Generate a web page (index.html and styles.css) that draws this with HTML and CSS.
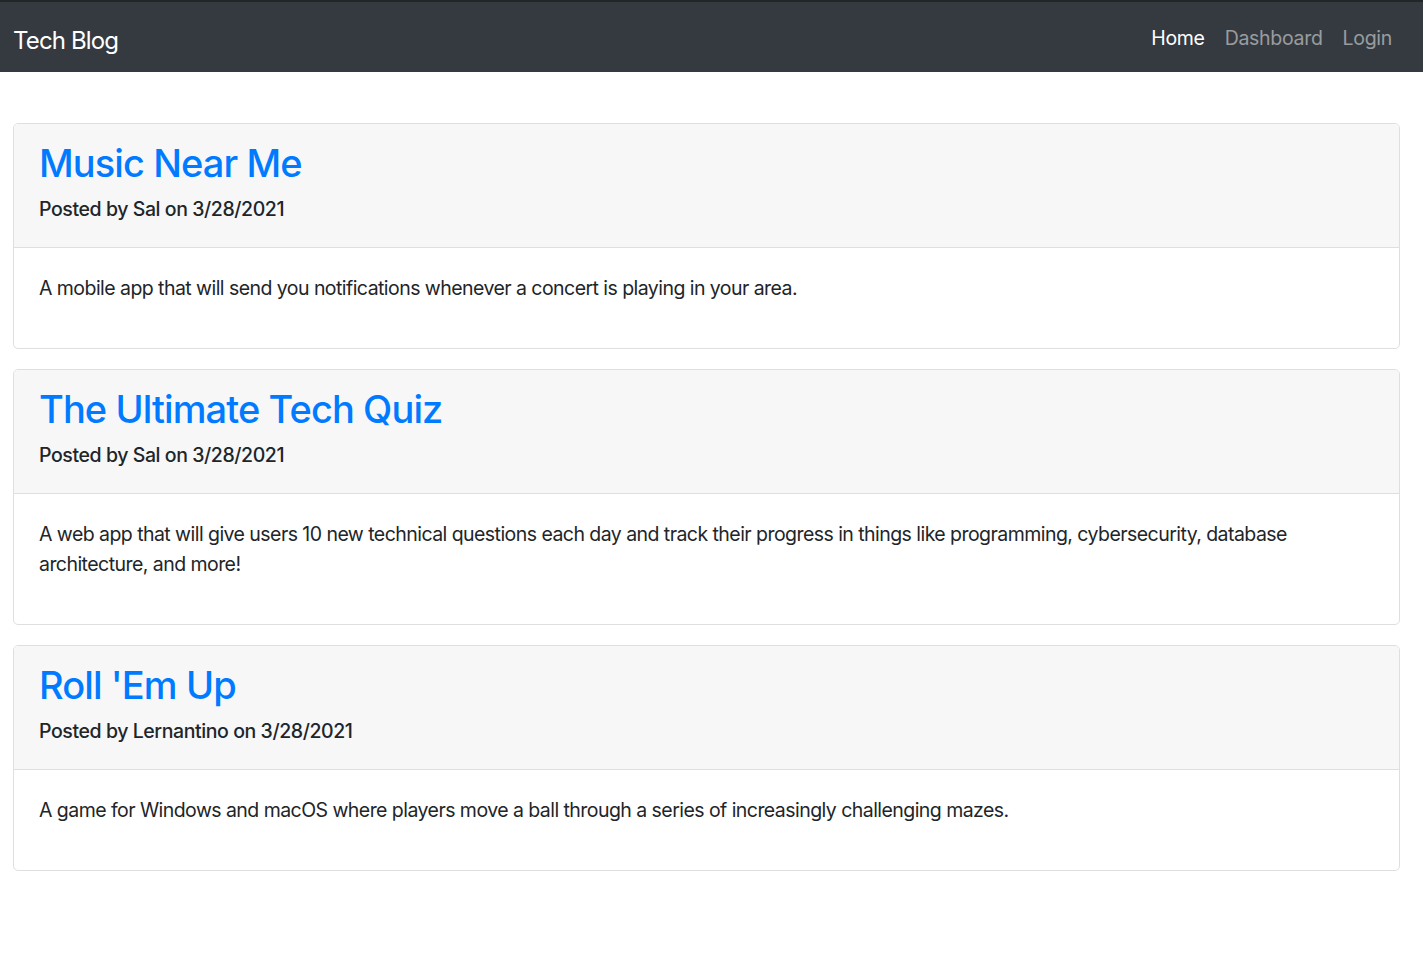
FILE: index.html
```html
<!DOCTYPE html>
<html lang="en">
<head>
<meta charset="utf-8">
<title>Tech Blog</title>
<link rel="stylesheet" href="styles.css">
</head>
<body>
<div class="topline"></div>
<nav class="navbar">
  <a class="brand" href="#">Tech Blog</a>
  <ul class="nav">
    <li><a class="nav-link active" href="#">Home</a></li>
    <li><a class="nav-link" href="#">Dashboard</a></li>
    <li><a class="nav-link" href="#">Login</a></li>
  </ul>
</nav>
<main class="posts">
  <article class="card">
    <header class="card-header">
      <h2 class="title"><a href="#">Music Near Me</a></h2>
      <h6 class="meta">Posted by Sal on 3/28/2021</h6>
    </header>
    <div class="card-body">
      <p>A mobile app that will send you notifications whenever a concert is playing in your area.</p>
    </div>
  </article>
  <article class="card">
    <header class="card-header">
      <h2 class="title"><a href="#">The Ultimate Tech Quiz</a></h2>
      <h6 class="meta">Posted by Sal on 3/28/2021</h6>
    </header>
    <div class="card-body">
      <p>A web app that will give users 10 new technical questions each day and track their progress in things like programming, cybersecurity, database architecture, and more!</p>
    </div>
  </article>
  <article class="card">
    <header class="card-header">
      <h2 class="title"><a href="#">Roll 'Em Up</a></h2>
      <h6 class="meta">Posted by Lernantino on 3/28/2021</h6>
    </header>
    <div class="card-body">
      <p>A game for Windows and macOS where players move a ball through a series of increasingly challenging mazes.</p>
    </div>
  </article>
</main>
</body>
</html>
```

FILE: styles.css
```css
* { box-sizing: border-box; }
html, body { margin: 0; padding: 0; }
body {
  font-family: Inter, "Noto Sans", "Liberation Sans", sans-serif;
  font-size: 20px;
  line-height: 1.5;
  color: #212529;
  background: #fff;
}
.topline { height: 2px; background: #232629; }
.navbar {
  height: 70px;
  background: #343a40;
  display: flex;
  align-items: center;
  justify-content: space-between;
  padding: 4px 21px 0 13px;
}
.brand {
  color: #fff;
  text-decoration: none;
  font-size: 24px;
  letter-spacing: -0.85px;
  line-height: 37px;
  padding-top: 2px;
}
.nav {
  list-style: none;
  margin: 0;
  padding: 0;
  display: flex;
}
.nav-link {
  display: block;
  padding: 0 10px;
  font-size: 19.5px;
  letter-spacing: -0.3px;
  color: rgba(255,255,255,.5);
  text-decoration: none;
}
.nav-link.active { color: #fff; }
.posts {
  padding: 51px 23px 40px 13px;
  display: flex;
  flex-direction: column;
  gap: 20px;
}
.card {
  border: 1px solid #dfdfdf;
  border-radius: 5px;
  overflow: hidden;
}
.card-header {
  background: #f7f7f7;
  border-bottom: 1px solid #dfdfdf;
  padding: 15px 25px;
}
.title {
  margin: 0 0 10px;
  font-size: 38px;
  font-weight: 500;
  line-height: 48px;
  letter-spacing: -0.9px;
}
.title a { color: #007bff; text-decoration: none; }
.meta {
  margin: 0 0 11px;
  font-size: 19.5px;
  font-weight: 500;
  line-height: 24px;
  letter-spacing: -0.42px;
}
.card-body { padding: 25px; }
.card-body p {
  margin: 0 0 20px;
  font-size: 19.5px;
  line-height: 30px;
  letter-spacing: -0.55px;
}
```
